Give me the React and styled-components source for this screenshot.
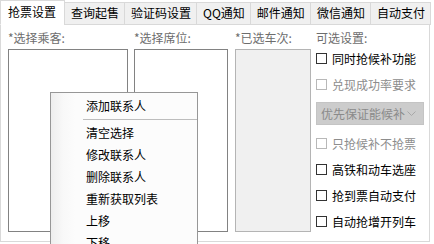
import React from "react"
import styled, { createGlobalStyle } from "styled-components"

const GlobalStyle = createGlobalStyle`
   html, body {
      margin: 0;
      padding: 0;
      background: #ffffff;
   }
   body {
      font-family: "Noto Sans CJK SC", "Noto Sans", sans-serif;
      font-size: 12px;
      color: #000;
   }
`

const tabs = ["抢票设置", "查询起售", "验证码设置", "QQ通知", "邮件通知", "微信通知", "自动支付"]

const options = [
   { label: "同时抢候补功能" },
   { label: "兑现成功率要求", disabled: true },
]

const optionsAfter = [
   { label: "只抢候补不抢票", disabled: true },
   { label: "高铁和动车选座" },
   { label: "抢到票自动支付" },
   { label: "自动抢增开列车" },
]

const menuItems = ["清空选择", "修改联系人", "删除联系人", "重新获取列表", "上移", "下移"]

const App = () => {
   return (
      <>
         <GlobalStyle />
         <Window>
            <TabBar>
               {tabs.map((t, i) => (
                  <Tab key={t} $active={i === 0}>
                     {t}
                  </Tab>
               ))}
            </TabBar>
            <Panel>
               <Column>
                  <Label>*选择乘客:</Label>
                  <ListBox />
               </Column>
               <Column>
                  <Label>*选择席位:</Label>
                  <ListBox />
               </Column>
               <Column>
                  <Label>*已选车次:</Label>
                  <ListBox $disabled />
               </Column>
               <Options>
                  <OptionsLabel>可选设置:</OptionsLabel>
                  {options.map(o => (
                     <CheckRow key={o.label} $disabled={o.disabled}>
                        <Box $disabled={o.disabled} />
                        {o.label}
                     </CheckRow>
                  ))}
                  <Select>
                     优先保证能候补
                     <svg width='9' height='6' viewBox='0 0 9 6'>
                        <path d='M0.5 0.5 L4.5 4.5 L8.5 0.5' fill='none' stroke='#a8a8a8' strokeWidth='1' />
                     </svg>
                  </Select>
                  {optionsAfter.map(o => (
                     <CheckRow key={o.label} $disabled={o.disabled}>
                        <Box $disabled={o.disabled} />
                        {o.label}
                     </CheckRow>
                  ))}
               </Options>
            </Panel>
            <Menu>
               <MenuItem>添加联系人</MenuItem>
               <Separator />
               {menuItems.map(m => (
                  <MenuItem key={m}>{m}</MenuItem>
               ))}
            </Menu>
         </Window>
      </>
   )
}

export default App

const Window = styled.div`
   position: relative;
   width: 434px;
   height: 244px;
   overflow: hidden;
   background: #ffffff;
`
const TabBar = styled.div`
   display: flex;
   align-items: flex-end;
   height: 25px;
   position: relative;
   z-index: 1;
`
const Tab = styled.div`
   box-sizing: border-box;
   height: ${p => (p.$active ? "25px" : "23px")};
   padding: ${p => (p.$active ? "0 8px 1px 7px" : "0 5px 1px 6px")};
   display: flex;
   align-items: center;
   background: ${p => (p.$active ? "#ffffff" : "#f0f0f0")};
   border: 1px solid #d9d9d9;
   border-bottom: ${p => (p.$active ? "1px solid #ffffff" : "1px solid #d9d9d9")};
   margin-left: -1px;
   &:first-child {
      margin-left: 0;
   }
   color: #000;
   white-space: nowrap;
   line-height: 16px;
`
const Panel = styled.div`
   box-sizing: border-box;
   width: 430px;
   height: 218px;
   margin-top: -1px;
   border: 1px solid #d9d9d9;
   display: grid;
   grid-template-columns: 120px 95px 76px 109px;
   column-gap: 6px;
   padding: 5px 0 0 7px;
   align-items: start;
`
const Column = styled.div`
   display: flex;
   flex-direction: column;
   &:nth-child(2) {
      margin-right: 1px;
   }
`
const Label = styled.div`
   height: 16px;
   line-height: 16px;
   color: #6d6d6d;
   margin-bottom: 3px;
   white-space: nowrap;
`
const ListBox = styled.div`
   box-sizing: border-box;
   height: 183px;
   border: 1px solid ${p => (p.$disabled ? "#b4b4b4" : "#828282")};
   background: ${p => (p.$disabled ? "#f0f0f0" : "#ffffff")};
`
const Options = styled.div`
   display: flex;
   flex-direction: column;
   margin-left: -1px;
`
const OptionsLabel = styled.div`
   height: 15px;
   line-height: 16px;
   color: #6d6d6d;
   white-space: nowrap;
`
const CheckRow = styled.div`
   display: flex;
   align-items: center;
   gap: 5px;
   height: 26px;
   white-space: nowrap;
   color: ${p => (p.$disabled ? "#8d8d8d" : "#000")};
`
const Box = styled.span`
   box-sizing: border-box;
   width: 11px;
   height: 11px;
   border: 1px solid ${p => (p.$disabled ? "#b8b8b8" : "#333333")};
   background: #fff;
   flex-shrink: 0;
`
const Select = styled.div`
   box-sizing: border-box;
   width: 108px;
   height: 23px;
   margin: 5px 0;
   background: #cccccc;
   border: 1px solid #c4c4c4;
   color: #8a8a8a;
   display: flex;
   align-items: center;
   justify-content: space-between;
   padding: 0 7px 0 4px;
   white-space: nowrap;
`
const Menu = styled.div`
   position: absolute;
   left: 50px;
   top: 92px;
   width: 148px;
   height: 170px;
   box-sizing: border-box;
   border: 1px solid #979797;
   padding-top: 2px;
   background: linear-gradient(to right, #eeeeee 0px, #f8f8f8 12px, #fcfcfc 24px, #fcfcfc 100%);
   z-index: 2;
`
const MenuItem = styled.div`
   height: 22px;
   line-height: 22px;
   padding-left: 35px;
   color: #000;
   white-space: nowrap;
`
const Separator = styled.div`
   height: 1px;
   background: #bdbdbd;
   margin: 2px 0 2px 32px;
`
